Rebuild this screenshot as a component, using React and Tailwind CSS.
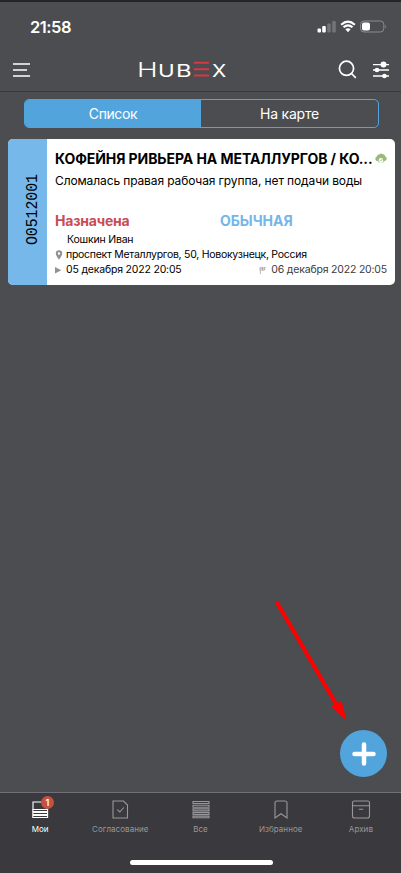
import React from 'react';

function StatusBar() {
  return (
    <div className="flex h-[50px] items-center justify-between border-t-2 border-[#242526] pl-[30px] pr-[14px] pt-[1px]">
      <span className="text-[16.5px] font-semibold leading-5 text-white tracking-[-0.5px]">21:58</span>
      <svg width="70" height="14" viewBox="317 20 70 14" fill="none">
        <rect x="317.5" y="28.5" width="3.5" height="4" rx="1" fill="#fff" />
        <rect x="322.2" y="26" width="3.6" height="6.5" rx="1" fill="#fff" />
        <rect x="327.2" y="23.5" width="3.6" height="9" rx="1" fill="#737477" />
        <rect x="332.2" y="21" width="3.6" height="11.5" rx="1" fill="#737477" />
        <path d="M341.2 24.7Q348 18.4 354.8 24.7" stroke="#fff" strokeWidth="2.2" />
        <path d="M343.5 27.3Q348 23.3 352.5 27.3" stroke="#fff" strokeWidth="2.1" />
        <path d="M345.4 29.3Q348 27.3 350.6 29.3L348 32.3Z" fill="#fff" />
        <rect x="360.6" y="21" width="23.2" height="11" rx="3.4" stroke="#8b8c8f" />
        <rect x="362" y="22.4" width="8" height="8.2" rx="2" fill="#fff" />
        <path d="M385.2 24.5q1.6 2 0 4z" fill="#8b8c8f" />
      </svg>
    </div>
  );
}

function Logo() {
  return (
    <div className="flex h-[18px] w-[92px] items-end text-white">
      <span className="w-[21px] origin-left scale-x-[1.36] text-[20.5px] font-light leading-[16px]">H</span>
      <span className="w-[18px] origin-left scale-x-[1.32] text-[17px] leading-[14px] font-normal">U</span>
      <span className="w-[18px] origin-left scale-x-[1.4] text-[17px] leading-[14px] font-normal">B</span>
      <svg className="mb-[1px] mr-[3px]" width="15" height="16" viewBox="0 0 15 16" fill="#d83743">
        <path d="M0 .8h15v2H0zM0 7.2h15v2H0zM0 13.6h15v2H0z" />
      </svg>
      <span className="origin-left scale-x-[1.23] text-[17px] leading-[14px]">X</span>
    </div>
  );
}

function Header() {
  return (
    <header className="flex h-[42px] items-center border-b border-[#39393c] pb-[2px] pl-[13px] pr-[11px]">
      <svg width="18" height="16" viewBox="0 0 18 16" stroke="#fff" strokeWidth="1.6">
        <path d="M0 2h17M0 8h14M0 14h17" />
      </svg>
      <div className="-mt-[1px] ml-[106px]"><Logo /></div>
      <svg className="ml-auto" width="19" height="19" viewBox="0 0 19 19" fill="none" stroke="#fff" strokeWidth="1.7" strokeLinecap="round">
        <circle cx="8.5" cy="8.3" r="7.1" />
        <path d="m13.5 13.5 3.8 3.8" />
      </svg>
      <svg className="ml-[15px]" width="18" height="18" viewBox="0 0 18 18" stroke="#fff" strokeWidth="1.3">
        <path d="M1 3.7h16M1 9h16M1 15h16" />
        <g fill="#fff" stroke="none"><circle cx="11.5" cy="3.5" r="3" /><circle cx="5" cy="9" r="2.3" /><circle cx="12.4" cy="15" r="2.3" /></g>
      </svg>
    </header>
  );
}

function Segments() {
  return (
    <div className="ml-[24px] mt-[7px] flex h-[29px] w-[355px] overflow-hidden rounded-[5px] border border-[#52a5dc] text-center text-[14px] leading-[28px] text-white">
      <div className="w-[176px] bg-[#52a5dc] tracking-[-0.4px]">Список</div>
      <div className="flex-1 tracking-[-0.2px]">На карте</div>
    </div>
  );
}

function TicketCard() {
  return (
    <article className="ml-[8px] mt-[11px] mr-[6px] flex h-[146px] overflow-hidden rounded-[5px] bg-white text-black">
      <div className="flex w-[39px] shrink-0 items-center justify-center bg-[#75b8e9] pl-[9px] pb-[5px]">
        <span className="rotate-180 scale-x-[1.15] font-['Liberation_Mono',monospace] text-[14.8px] leading-none [writing-mode:vertical-rl]">O0512001</span>
      </div>
      <div className="flex min-w-0 flex-1 flex-col pl-[8px] pr-[8px] pt-[11px]">
        <div className="flex h-[18px] items-center">
          <h2 className="w-[318px] shrink-0 whitespace-nowrap text-[14px] font-bold leading-[18px] tracking-[-0.07px]">КОФЕЙНЯ РИВЬЕРА НА МЕТАЛЛУРГОВ / КО...</h2>
          <svg className="ml-[2px] mb-[2px] shrink-0" width="12" height="11" viewBox="0 0 12 11">
            <path d="M.4 6.4Q0 4 2 3.4 2.2 1.3 4.2 1.6 6-.2 7.8 1.3 9.8 1 10 3.2q2.1.7 1.6 3.1-.4 1.7-2.2 1.7L8 9.6H3.8L2.7 7.9Q.8 8 .4 6.4Z" fill="#99b974" />
            <circle cx="5.9" cy="7.4" r="2.3" fill="#fff" />
            <path d="m4.7 7 1 1.1 1.5-2" fill="none" stroke="#99b974" strokeWidth=".8" />
          </svg>
        </div>
        <p className="mt-[5px] whitespace-nowrap text-[12px] leading-[16px] tracking-[-0.12px]">Сломалась правая рабочая группа, нет подачи воды</p>
        <div className="mt-[22px] flex h-[20px] items-center text-[14px] font-bold leading-5">
          <span className="w-[165px] text-[#c84c56] tracking-[-0.2px]">Назначена</span>
          <span className="text-[#73b6e8]">ОБЫЧНАЯ</span>
        </div>
        <p className="mt-[1px] pl-[12px] text-[10.5px] leading-[15px] tracking-[-0.2px]">Кошкин Иван</p>
        <div className="flex h-[15px] items-center whitespace-nowrap text-[10.5px] tracking-[-0.27px]">
          <svg className="mr-[3px]" width="8" height="10" viewBox="0 0 8 10" fill="#929292">
            <path fillRule="evenodd" d="M4 .3a3.2 3.2 0 0 1 3.2 3.2C7.2 5.8 4 9.6 4 9.6S.8 5.8.8 3.5A3.2 3.2 0 0 1 4 .3Zm0 2a1.2 1.2 0 1 0 0 2.4 1.2 1.2 0 0 0 0-2.4Z" />
          </svg>
          <span>проспект Металлургов, 50, Новокузнецк, Россия</span>
        </div>
        <div className="flex h-[16px] items-center whitespace-nowrap text-[10.5px] tracking-[-0.19px]">
          <svg className="mr-[4px]" width="7" height="8" viewBox="0 0 7 8" fill="#929292"><path d="M0 1v6.5L6.3 4.2z" /></svg>
          <span>05 декабря 2022 20:05</span>
          <svg className="ml-auto mr-[5px]" width="7" height="9" viewBox="0 0 8 9" fill="none" stroke="#a0a0a0" strokeWidth=".9"><path d="M1.8 8.5 1 1.5q1.5-1 3-.4 1.4.6 3-.2L6.4 4q-1.5.7-2.7.1-1-.4-2.2.3M1.2 2.7h5.2M4 1.1v2.7" /></svg>
          <span className="text-[#3c3c3c]">06 декабря 2022 20:05</span>
        </div>
      </div>
    </article>
  );
}

const icons = {
  mine: <path d="M1 9V2h11q3 0 3 3v4M.8 9.5h14.8v2H.8zM.8 12.5h14.8v2H.8zM.8 15.5h14.8v2H.8z" />,
  approval: <path d="M1 1h10.5L15.5 5v13H1zM5.3 9.7l2.5 2.3 4-4.5" />,
  all: <path d="M0 1.5h16v2H0zM0 5.2h16v2H0zM0 8.9h16v2H0zM0 12.6h16v2H0zM0 16.2h16v1.6H0z" />,
  favorite: <path d="M2 18V3q0-2 2-2h8q2 0 2 2v15l-6-4.3Z" />,
  archive: <path d="M-.5 2.8Q-.5 1 1.3 1h13.4q1.8 0 1.8 1.8v12.9q0 2.3-2.3 2.3H1.8Q-.5 18-.5 15.7ZM-.5 5.8h17M5.8 9.2h4.4" />,
};

function Tab({ icon, label, active, badge }) {
  return (
    <div className={`relative flex flex-1 flex-col items-center pt-[7px] ${active ? 'text-white' : 'text-[#98989b]'}`}>
      <svg className="overflow-visible" width="16" height="19" viewBox="0 0 16 19" fill="none" stroke="currentColor" strokeWidth="1.1">{icons[icon]}</svg>
      <span className="mt-[5px] text-[8px] leading-[10px] tracking-[0.06px]">{label}</span>
      {badge && <span className="absolute left-[41px] top-[3px] h-[13px] w-[13px] rounded-full bg-[#c94f41] text-center text-[9px] font-semibold leading-[13px] text-white">{badge}</span>}
    </div>
  );
}

function TabBar() {
  return (
    <footer className="h-[81px] border-t border-[#707174] bg-[#3a393d]">
      <nav className="flex h-[67px]">
        <Tab icon="mine" label="Мои" active badge="1" />
        <Tab icon="approval" label="Согласование" />
        <Tab icon="all" label="Все" />
        <Tab icon="favorite" label="Избранное" />
        <Tab icon="archive" label="Архив" />
      </nav>
      <div className="ml-[130px] h-[5px] w-[143px] rounded-full bg-white" />
    </footer>
  );
}

export default function App() {
  return (
    <div className="relative flex h-[873px] w-[401px] flex-col overflow-hidden bg-[#4c4d50] font-['Inter',sans-serif]">
      <StatusBar />
      <Header />
      <main className="flex-1">
        <Segments />
        <TicketCard />
      </main>
      <TabBar />
      <button className="absolute left-[340px] top-[730px] flex h-[47px] w-[47px] items-center justify-center rounded-full bg-[#52a5dc]" aria-label="+">
        <svg width="24" height="24" viewBox="0 0 24 24" stroke="#fff" strokeWidth="4.5" strokeLinecap="round"><path d="M12 2.5v19M2.5 12h19" /></svg>
      </button>
      <svg className="pointer-events-none absolute left-[270px] top-[596px]" width="84" height="130" viewBox="270 596 84 130">
        <path d="m277.5 603.5 60 103" stroke="#f00" strokeWidth="4" strokeLinecap="round" />
        <path d="m331.3 706.5 10.2-5.8 5 19.8z" fill="#f00" />
      </svg>
    </div>
  );
}
